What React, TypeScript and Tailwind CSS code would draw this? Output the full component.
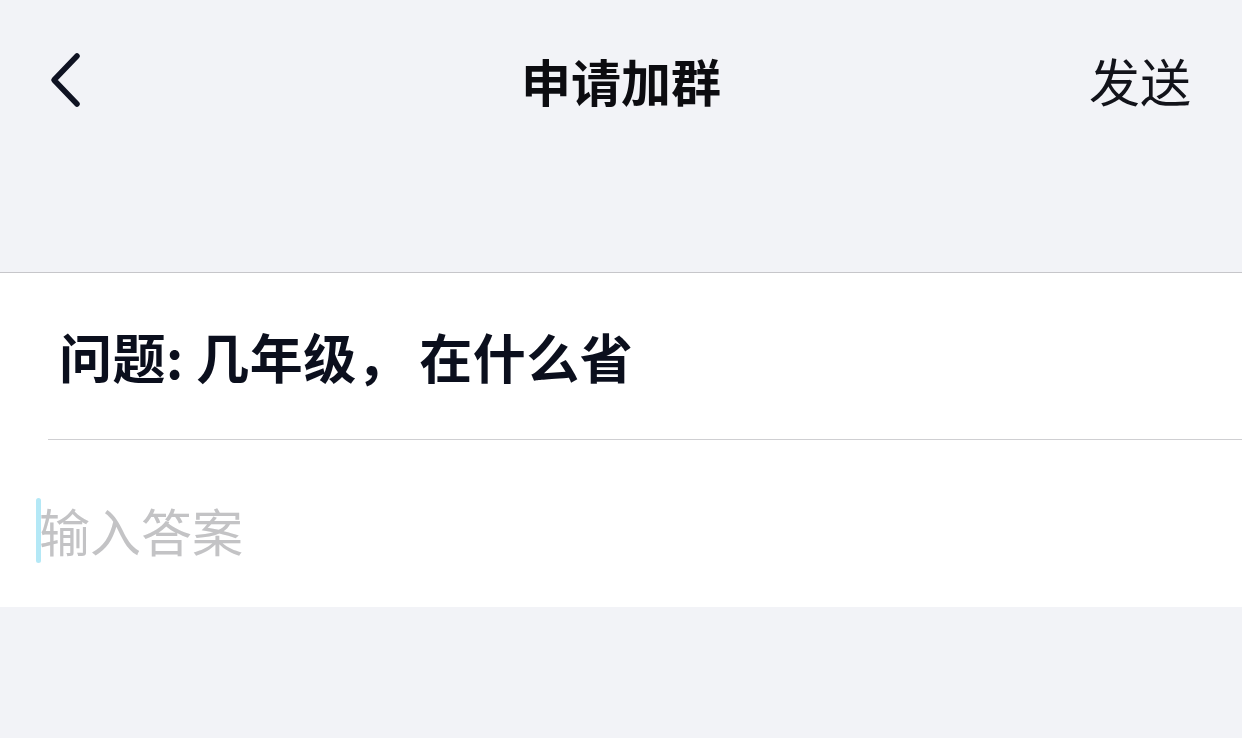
const font = { fontFamily: '"Noto Sans CJK SC", "Noto Sans", sans-serif' };

export default function App() {
  return (
    <div className="min-h-[738px] w-full bg-[#f2f3f7]" style={font}>
      <header className="h-[273px] border-b border-[#c6c6ca]">
        <div className="relative flex h-[160px] items-center justify-between pl-[48px] pr-[51px]">
          <button type="button" className="flex h-[60px] w-[40px] items-center">
            <svg width="34" height="56" viewBox="0 0 34 56" fill="none">
              <polyline
                points="29,4 6,28 29,52"
                stroke="#0f1322"
                strokeWidth="5.5"
                strokeLinecap="round"
                strokeLinejoin="round"
              />
            </svg>
          </button>
          <h1 className="absolute left-1/2 -translate-x-1/2 text-[50px] font-bold leading-none text-[#0c0c10]">申请加群</h1>
          <button type="button" className="text-[51px] leading-none text-[#12131a]">
            发送
          </button>
        </div>
      </header>

      <section className="bg-white">
        <div className="flex h-[166px] items-center pl-[59px]">
          <p className="text-[53px] font-bold leading-none tracking-[0.5px] text-[#0b0f1d]">
            问题: 几年级<span className="mr-[9px]">，</span>在什么省
          </p>
        </div>
        <div className="ml-[48px] border-b border-[#cfcfd2]" />
        <div className="flex h-[167px] items-center pl-[36px] pt-[14px]">
          <span className="mr-[-2px] h-[65px] w-[5px] rounded-full bg-[#b4e8f6]" />
          <span className="text-[51px] leading-none text-[#c3c3c5]">输入答案</span>
        </div>
      </section>
    </div>
  );
}
